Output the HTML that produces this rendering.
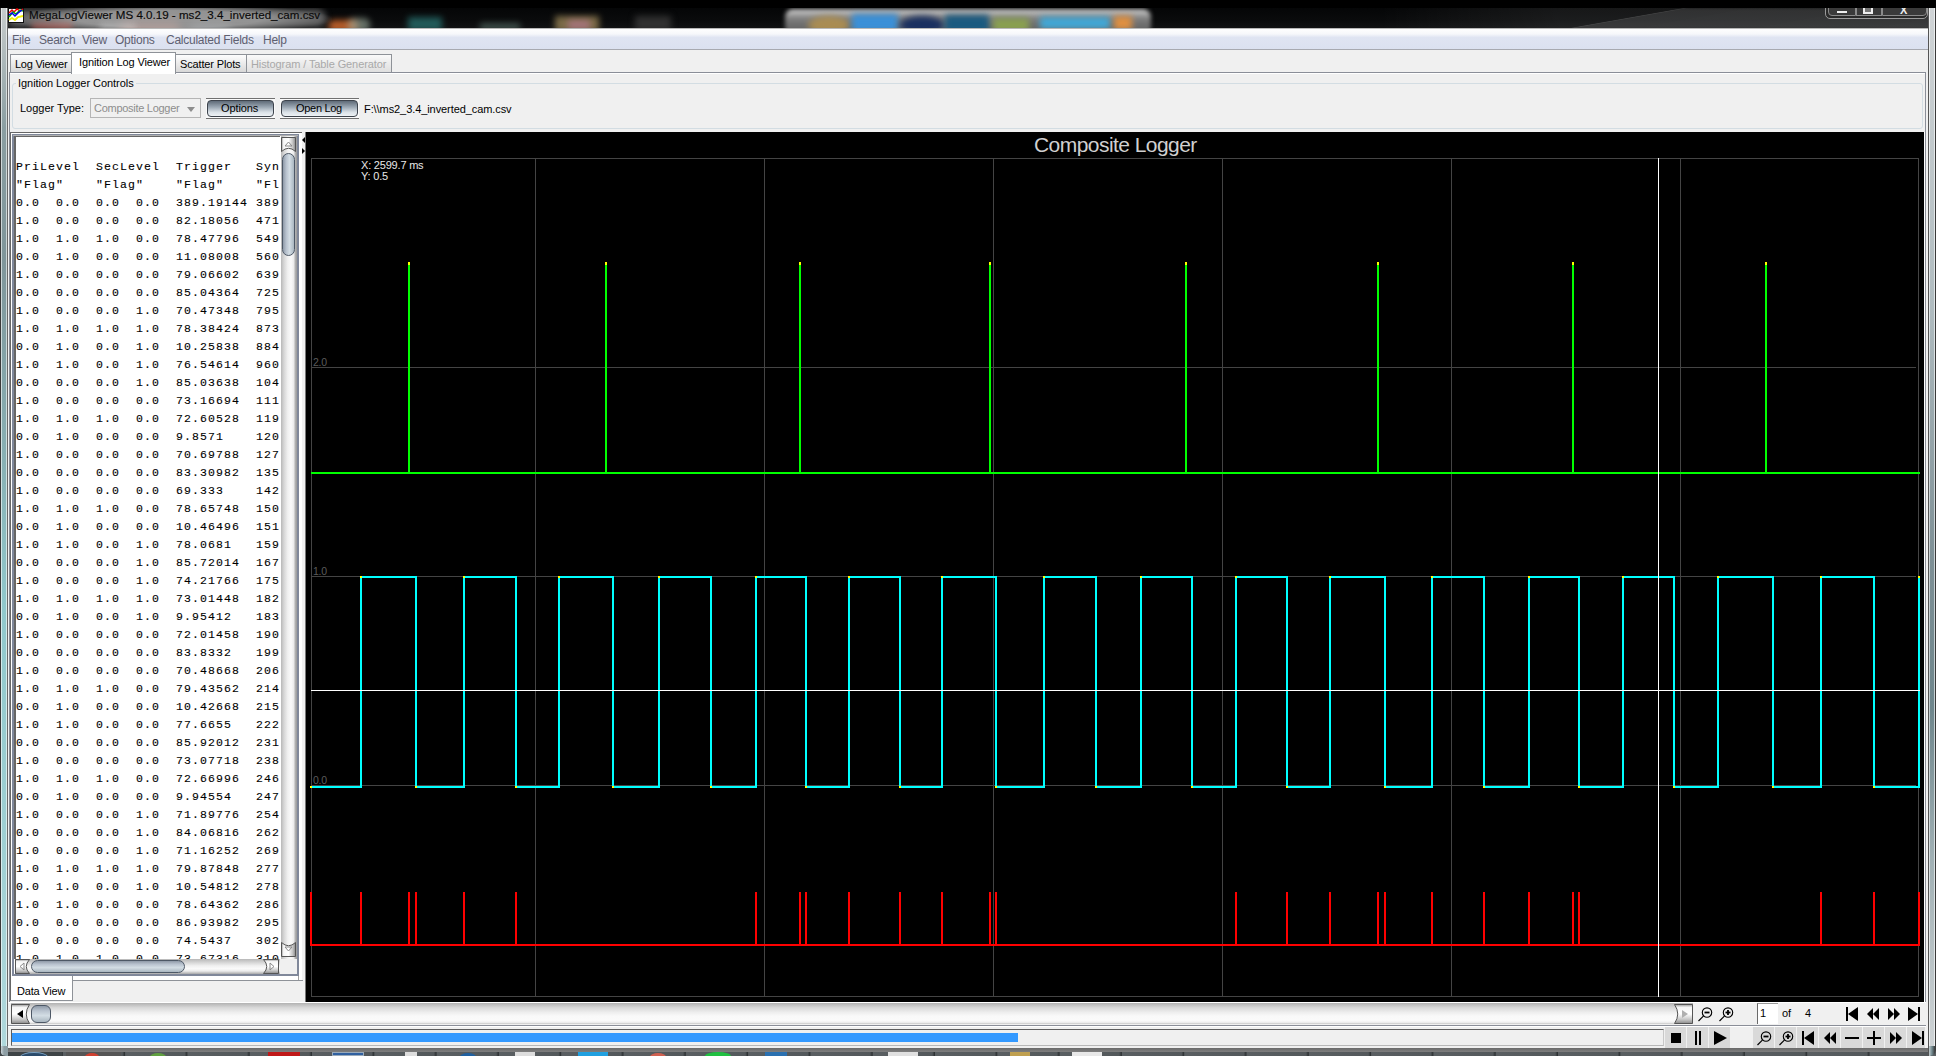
<!DOCTYPE html>
<html><head><meta charset="utf-8">
<style>
*{box-sizing:border-box;margin:0;padding:0}
html,body{width:1936px;height:1056px;overflow:hidden;background:#000;font-family:"Liberation Sans",sans-serif;font-size:11px;color:#000}
.a{position:absolute}
.t{position:absolute;white-space:pre;line-height:13px;font-size:11px}
.m{position:absolute;white-space:pre;line-height:14px;font-size:12px;color:#5e6070;letter-spacing:-0.25px}
.tabi{position:absolute;border:1px solid #8e9298;border-bottom:none;background:linear-gradient(#fdfdfd,#ececec 45%,#d6d6d6)}
.sbtn{position:absolute;background:linear-gradient(90deg,#7a7a7a 0,#f4f4f4 12%,#ffffff 45%,#c8c8c8 80%,#8a8a8a 100%);border:1px solid #5a5a5a;border-radius:2px}
.sbtnh{position:absolute;background:linear-gradient(#7a7a7a 0,#f4f4f4 12%,#ffffff 45%,#c8c8c8 80%,#8a8a8a 100%);border:1px solid #5a5a5a;border-radius:2px}
.thumbv{position:absolute;border:1px solid #4d5866;border-radius:7px;background:linear-gradient(90deg,#8f9aa8,#b9c3cf 30%,#d3dde4 60%,#a9b6c0)}
.thumbh{position:absolute;border:1px solid #4d5866;border-radius:7px;background:linear-gradient(#8f9aa8,#b9c3cf 30%,#d3dde4 60%,#a9b6c0)}
.tb{position:absolute;top:1027px;height:21px;background:#d9d9d9}
</style></head><body>
<svg width="0" height="0" style="position:absolute"><defs>
<linearGradient id="gv" x1="0" y1="0" x2="1" y2="0"><stop offset="0" stop-color="#9a9a9a"/><stop offset=".15" stop-color="#f6f6f6"/><stop offset=".5" stop-color="#ffffff"/><stop offset=".8" stop-color="#c4c4c4"/><stop offset="1" stop-color="#8a8a8a"/></linearGradient>
<linearGradient id="gh" x1="0" y1="0" x2="0" y2="1"><stop offset="0" stop-color="#9a9a9a"/><stop offset=".15" stop-color="#f6f6f6"/><stop offset=".5" stop-color="#ffffff"/><stop offset=".8" stop-color="#c4c4c4"/><stop offset="1" stop-color="#8a8a8a"/></linearGradient>
</defs></svg>
<!-- ===== title bar ===== -->
<div class="a" style="left:0;top:0;width:1936px;height:8px;background:#000"></div>
<div class="a" style="left:0;top:8px;width:1936px;height:21px;background:linear-gradient(90deg,rgba(0,0,0,0) 0,rgba(0,0,0,0) 1380px,rgba(255,255,255,.07) 1560px),linear-gradient(#050607,#0a0b0c 60%,#121314);overflow:hidden">
  <div class="a" style="left:1565px;top:0;width:600px;height:21px;transform-origin:0 100%;transform:skewX(-80deg);background:linear-gradient(90deg,rgba(255,255,255,.22) 0,rgba(255,255,255,.11) 5px,rgba(255,255,255,.13) 100%);filter:blur(1.5px)"></div>
  <div class="a" style="left:120px;top:10px;width:60px;height:14px;border-radius:7px;background:#c0503a;filter:blur(4px);opacity:.8"></div>
  <div class="a" style="left:190px;top:12px;width:40px;height:12px;border-radius:6px;background:#8a9aa8;filter:blur(4px);opacity:.5"></div>
  <div class="a" style="left:328px;top:12px;width:30px;height:12px;border-radius:6px;background:#e07030;filter:blur(3px);opacity:.8"></div>
  <div class="a" style="left:348px;top:10px;width:22px;height:14px;border-radius:6px;background:#a0b0a0;filter:blur(3px);opacity:.6"></div>
  <div class="a" style="left:408px;top:9px;width:34px;height:14px;background:#2a7a78;filter:blur(3px);opacity:.7"></div>
  <div class="a" style="left:480px;top:15px;width:40px;height:8px;background:#6a8a80;filter:blur(3px);opacity:.5"></div>
  <div class="a" style="left:555px;top:8px;width:44px;height:16px;background:#a08a5a;filter:blur(3px);opacity:.75"></div>
  <div class="a" style="left:568px;top:12px;width:22px;height:10px;background:#c07a9a;filter:blur(3px);opacity:.6"></div>
  <div class="a" style="left:635px;top:8px;width:36px;height:16px;background:#303030;filter:blur(3px)"></div>
  <!-- dock -->
  <div class="a" style="left:785px;top:1px;width:366px;height:26px;border-radius:8px;background:linear-gradient(#d0d0d0,#7a7a7a 40%,#5a5a5a);filter:blur(2px)"></div>
  <div class="a" style="left:808px;top:8px;width:42px;height:18px;border-radius:50%;background:#b09050;filter:blur(3px);opacity:.9"></div>
  <div class="a" style="left:852px;top:6px;width:46px;height:18px;background:#3a90d8;filter:blur(3px)"></div>
  <div class="a" style="left:900px;top:8px;width:44px;height:18px;border-radius:50%;background:#1a3060;filter:blur(3px)"></div>
  <div class="a" style="left:945px;top:7px;width:44px;height:18px;background:#1a5a80;filter:blur(3px)"></div>
  <div class="a" style="left:993px;top:10px;width:36px;height:14px;background:#8aa050;filter:blur(3px)"></div>
  <div class="a" style="left:1040px;top:9px;width:70px;height:12px;background:#40a8d8;filter:blur(3px)"></div>
  <div class="a" style="left:1114px;top:8px;width:18px;height:14px;background:#e09040;filter:blur(3px)"></div>
  <!-- title glow -->
  <div class="a" style="left:6px;top:-4px;width:326px;height:30px;border-radius:14px;background:radial-gradient(ellipse at center,rgba(190,190,190,.75) 40%,rgba(120,120,120,.0) 72%);"></div>
  <div class="a" style="left:6px;top:1px;width:320px;height:18px;border-radius:9px;background:rgba(150,150,150,.55);filter:blur(3px)"></div>
  <div class="a" style="left:32px;top:15px;width:40px;height:8px;background:rgba(215,110,100,.55);filter:blur(3px)"></div>
  <div class="a" style="left:100px;top:15px;width:36px;height:8px;background:rgba(220,220,220,.35);filter:blur(3px)"></div>
  <!-- controls -->
  <div class="a" style="left:1825px;top:-4px;width:103px;height:15px;border:1px solid #9a9a9a;border-radius:0 0 5px 5px;background:#2a2a2a"></div>
  <div class="a" style="left:1828px;top:-4px;width:28px;height:12px;border:1px solid #8a8a8a;border-radius:0 0 0 4px;background:#3a3a3a"></div>
  <div class="a" style="left:1856px;top:-4px;width:26px;height:12px;border:1px solid #8a8a8a;background:#3a3a3a"></div>
  <div class="a" style="left:1882px;top:-4px;width:45px;height:12px;border:1px solid #8a8a8a;border-radius:0 0 4px 0;background:#3a3a3a"></div>
  <div class="a" style="left:1837px;top:3px;width:10px;height:2px;background:#eee"></div>
  <div class="a" style="left:1863px;top:0px;width:10px;height:6px;border:2px solid #eee;border-top:none;background:#777"></div>
  <div class="a" style="left:1900px;top:-1px;width:10px;height:6px;color:#eee;font-size:11px;line-height:6px;font-weight:bold">X</div>
</div>
<!-- icon -->
<svg class="a" style="left:8px;top:8px" width="16" height="15" viewBox="0 0 16 15">
<rect x="0.5" y="0.5" width="15" height="14" fill="#fff" stroke="#111"/>
<polyline points="1,5 4,2 6,4 9,1 12,3 15,1" fill="none" stroke="#e00" stroke-width="1.5"/>
<polyline points="1,9 5,4 8,6 12,2 15,3" fill="none" stroke="#0a0" stroke-width="1.5"/>
<polyline points="1,7 4,5 7,8 10,5 14,2" fill="none" stroke="#00e" stroke-width="1.5"/>
<polyline points="1,12 4,10 7,12 10,9 15,8" fill="none" stroke="#ee0" stroke-width="1.8"/>
</svg>
<div class="a" style="left:29px;top:8px;font-size:11.6px;line-height:14px;white-space:pre;color:#0a0a0a;-webkit-text-stroke:0.15px #0a0a0a">MegaLogViewer MS 4.0.19 - ms2_3.4_inverted_cam.csv</div>

<!-- ===== window frame ===== -->
<div class="a" style="left:0;top:8px;width:8px;height:1042px;background:linear-gradient(90deg,#3a3a3a 0,#3a3a3a 1px,rgba(255,255,255,.6) 1px,rgba(255,255,255,.6) 2px,transparent 2px,transparent 6px,rgba(255,255,255,.6) 6px,rgba(255,255,255,.6) 7px,#686868 7px),linear-gradient(#c8cccc 0,#8a9ea2 120px,#7f959a 250px,#88b0b4 450px,#90c8cc 600px,#a0d0d4 850px,#b0d8dc 1042px)"></div>
<div class="a" style="left:1928px;top:8px;width:8px;height:1042px;background:linear-gradient(90deg,#555 0,#555 1px,rgba(255,255,255,.6) 1px,rgba(255,255,255,.6) 2px,transparent 2px,transparent 6px,rgba(255,255,255,.6) 6px,rgba(255,255,255,.6) 7px,#3a3a3a 7px),linear-gradient(#d0d4d6 0,#b0bcc0 300px,#7e9096 550px,#6e868c 700px,#a0b0b4 850px,#d0d4d6 1042px)"></div>

<!-- ===== client ===== -->
<div class="a" style="left:8px;top:29px;width:1920px;height:1019px;background:#f0f0f0"></div>
<div class="a" style="left:8px;top:28px;width:1920px;height:1px;background:#b8b8b8"></div>
<!-- menu -->
<div class="a" style="left:8px;top:29px;width:1920px;height:20px;background:linear-gradient(#fefefe 0,#f6f7fb 25%,#dfe4f2 42%,#dbe1f0 100%)"></div>
<div class="a" style="left:8px;top:49px;width:1920px;height:1px;background:#a7a9b0"></div>
<div class="m" style="left:12px;top:33px">File</div>
<div class="m" style="left:39px;top:33px">Search</div>
<div class="m" style="left:82px;top:33px">View</div>
<div class="m" style="left:115px;top:33px">Options</div>
<div class="m" style="left:166px;top:33px">Calculated Fields</div>
<div class="m" style="left:263px;top:33px">Help</div>

<!-- tabs -->
<div class="a" style="left:8px;top:50px;width:1920px;height:22px;background:#f0f0f0"></div>
<div class="tabi" style="left:10px;top:54px;width:62px;height:19px"></div>
<div class="t" style="left:15px;top:58px;letter-spacing:-0.25px">Log Viewer</div>
<div class="tabi" style="left:175px;top:54px;width:72px;height:19px"></div>
<div class="t" style="left:180px;top:58px;letter-spacing:-0.15px">Scatter Plots</div>
<div class="tabi" style="left:246px;top:54px;width:146px;height:19px;background:linear-gradient(#fafafa,#ececec 45%,#dedede)"></div>
<div class="t" style="left:251px;top:58px;color:#a9a9a9;letter-spacing:-0.1px">Histogram / Table Generator</div>

<!-- content panel -->
<div class="a" style="left:9px;top:72px;width:1917px;height:1px;background:#8a8e98"></div>
<div class="a" style="left:9px;top:72px;width:1px;height:930px;background:#8a8e98"></div>
<div class="a" style="left:1925px;top:72px;width:1px;height:930px;background:#8a8e98"></div>
<div class="a" style="left:10px;top:73px;width:1915px;height:1px;background:#fff"></div>
<div class="a" style="left:71px;top:52px;width:105px;height:22px;border:1px solid #8e9298;border-bottom:none;background:#fff"></div>
<div class="t" style="left:79px;top:56px;letter-spacing:-0.12px">Ignition Log Viewer</div>

<!-- group box -->
<div class="a" style="left:12px;top:83px;width:1911px;height:46px;border:1px solid #d3dde3;border-radius:3px"></div>
<div class="t" style="left:16px;top:77px;padding:0 2px;background:#f0f0f0;letter-spacing:-0.05px">Ignition Logger Controls</div>
<div class="t" style="left:20px;top:102px">Logger Type:</div>
<div class="a" style="left:90px;top:98px;width:111px;height:20px;border:1px solid #b5b5b5;background:#f0f0f0"></div>
<div class="t" style="left:94px;top:102px;color:#8d8d8d;letter-spacing:-0.28px">Composite Logger</div>
<svg class="a" style="left:187px;top:107px" width="9" height="6"><polygon points="0,0 8,0 4,5" fill="#8d8d8d"/></svg>
<div class="a" style="left:206px;top:98px;width:69px;height:21px;border-top:1px solid #707070;border-bottom:1px solid #707070;background:#fafafa"></div>
<div class="a" style="left:207px;top:100px;width:67px;height:17px;border:1px solid #3d434c;border-radius:4px;background:linear-gradient(#5f6b78,#9aa6b2 40%,#dbe2e8 75%,#eef2f5)"></div>
<div class="t" style="left:221px;top:102px;letter-spacing:-0.1px">Options</div>
<div class="a" style="left:280px;top:98px;width:79px;height:21px;border-top:1px solid #707070;border-bottom:1px solid #707070;background:#fafafa"></div>
<div class="a" style="left:281px;top:100px;width:77px;height:17px;border:1px solid #3d434c;border-radius:4px;background:linear-gradient(#5f6b78,#9aa6b2 40%,#dbe2e8 75%,#eef2f5)"></div>
<div class="t" style="left:296px;top:102px;letter-spacing:-0.3px">Open Log</div>
<div class="t" style="left:364px;top:103px;letter-spacing:-0.08px">F:\\ms2_3.4_inverted_cam.csv</div>

<!-- ===== data panel ===== -->
<div class="a" style="left:10px;top:132px;width:292px;height:869px;border:1px solid #666;border-right:none;border-bottom:none;background:#fff"></div>
<div class="a" style="left:301px;top:132px;width:1px;height:1px;background:#666"></div>
<div class="a" style="left:11px;top:975px;width:288px;height:5px;background:#fff;border-right:1px solid #a0a0a0"></div>
<div class="a" style="left:12px;top:134px;width:287px;height:842px;border:2px solid #80889a;border-top-width:1px"></div>
<div class="a" style="left:13px;top:135px;width:285px;height:1px;background:#b0b0b0"></div>
<div class="a" style="left:14px;top:136px;width:267px;height:823px;background:#fff;border-top:1px solid #666;border-left:2px solid #666;overflow:hidden">
<pre style="position:absolute;left:0;top:21px;font-family:'Liberation Mono',monospace;font-size:11.5px;letter-spacing:1.1px;line-height:18px;tab-size:5;-moz-tab-size:5;color:#000;-webkit-text-stroke:0.1px #000">PriLevel	SecLevel	Trigger	Sync
&quot;Flag&quot;	&quot;Flag&quot;	&quot;Flag&quot;	&quot;Flag&quot;
0.0	0.0	0.0	0.0	389.19144	389
1.0	0.0	0.0	0.0	82.18056	471
1.0	1.0	1.0	0.0	78.47796	549
0.0	1.0	0.0	0.0	11.08008	560
1.0	0.0	0.0	0.0	79.06602	639
0.0	0.0	0.0	0.0	85.04364	725
1.0	0.0	0.0	1.0	70.47348	795
1.0	1.0	1.0	1.0	78.38424	873
0.0	1.0	0.0	1.0	10.25838	884
1.0	1.0	0.0	1.0	76.54614	960
0.0	0.0	0.0	1.0	85.03638	104
1.0	0.0	0.0	0.0	73.16694	111
1.0	1.0	1.0	0.0	72.60528	119
0.0	1.0	0.0	0.0	9.8571	120
1.0	0.0	0.0	0.0	70.69788	127
0.0	0.0	0.0	0.0	83.30982	135
1.0	0.0	0.0	0.0	69.333	142
1.0	1.0	1.0	0.0	78.65748	150
0.0	1.0	0.0	0.0	10.46496	151
1.0	1.0	0.0	1.0	78.0681	159
0.0	0.0	0.0	1.0	85.72014	167
1.0	0.0	0.0	1.0	74.21766	175
1.0	1.0	1.0	1.0	73.01448	182
0.0	1.0	0.0	1.0	9.95412	183
1.0	0.0	0.0	0.0	72.01458	190
0.0	0.0	0.0	0.0	83.8332	199
1.0	0.0	0.0	0.0	70.48668	206
1.0	1.0	1.0	0.0	79.43562	214
0.0	1.0	0.0	0.0	10.42668	215
1.0	1.0	0.0	0.0	77.6655	222
0.0	0.0	0.0	0.0	85.92012	231
1.0	0.0	0.0	0.0	73.07718	238
1.0	1.0	1.0	0.0	72.66996	246
0.0	1.0	0.0	0.0	9.94554	247
1.0	0.0	0.0	1.0	71.89776	254
0.0	0.0	0.0	1.0	84.06816	262
1.0	0.0	0.0	1.0	71.16252	269
1.0	1.0	1.0	1.0	79.87848	277
0.0	1.0	0.0	1.0	10.54812	278
1.0	1.0	0.0	0.0	78.64362	286
0.0	0.0	0.0	0.0	86.93982	295
1.0	0.0	0.0	0.0	74.5437	302
1.0	1.0	1.0	0.0	73.67316	310</pre>
</div>
<!-- v scroll -->
<div class="a" style="left:280px;top:136px;width:17px;height:823px;background:linear-gradient(90deg,#ffffff 0,#ffffff 6%,#b8b8b8 6%,#d4d4d4 22%,#f0f0f0 45%,#fafafa 65%,#ececec 80%,#a0a0a0 94%,#a0a0a0 100%)"></div>
<svg class="a" style="left:281px;top:137px" width="15" height="15"><path d="M0.5,0.5 H14.5 V14.5 Q7.5,8 0.5,14.5 Z" fill="url(#gv)" stroke="#555"/></svg>
<svg class="a" style="left:284px;top:141px" width="9" height="6"><polygon points="1,5 4.5,1 8,5" fill="none" stroke="#8a8a8a"/></svg>
<div class="thumbv" style="left:282px;top:153px;width:13px;height:103px"></div>
<svg class="a" style="left:281px;top:942px" width="15" height="15"><path d="M0.5,14.5 H14.5 V0.5 Q7.5,7 0.5,0.5 Z" fill="url(#gv)" stroke="#555"/></svg>
<svg class="a" style="left:284px;top:946px" width="9" height="6"><polygon points="1,1 4.5,5 8,1" fill="none" stroke="#8a8a8a"/></svg>
<!-- h scroll -->
<div class="a" style="left:15px;top:959px;width:266px;height:15px;background:linear-gradient(#b8b8b8 0,#d4d4d4 22%,#f0f0f0 45%,#fafafa 65%,#ececec 80%,#a8a8a8 100%)"></div>
<svg class="a" style="left:15px;top:959px" width="15" height="15"><path d="M0.5,0.5 V14.5 H14.5 Q8,7.5 14.5,0.5 Z" fill="url(#gh)" stroke="#555"/></svg>
<svg class="a" style="left:19px;top:962px" width="6" height="9"><polygon points="5,1 1,4.5 5,8" fill="none" stroke="#8a8a8a"/></svg>
<div class="thumbh" style="left:31px;top:960px;width:154px;height:13px"></div>
<svg class="a" style="left:263px;top:959px" width="16" height="15"><path d="M15.5,0.5 V14.5 H0.5 Q7,7.5 0.5,0.5 Z" fill="url(#gh)" stroke="#555"/></svg>
<svg class="a" style="left:269px;top:962px" width="6" height="9"><polygon points="1,1 5,4.5 1,8" fill="none" stroke="#8a8a8a"/></svg>
<div class="a" style="left:280px;top:959px;width:17px;height:15px;background:#f0f0f0"></div>
<!-- splitter arrows -->
<svg class="a" style="left:301px;top:136px" width="5" height="20"><polygon points="4,1 1,4 4,7" fill="#000"/><polygon points="1,12 4,15 1,18" fill="#000"/></svg>
<!-- data view tab -->
<div class="a" style="left:72px;top:980px;width:231px;height:21px;background:#f0f0f0;border-top:1px solid #8e9298"></div>
<div class="a" style="left:10px;top:976px;width:63px;height:25px;border:1px solid #8e9298;border-top:none;border-left-color:#666;background:#fff"></div>
<div class="t" style="left:17px;top:985px;letter-spacing:-0.2px">Data View</div>

<!-- ===== chart ===== -->
<div class="a" style="left:305px;top:132px;width:1619px;height:870px;background:#000;border-left:1px solid #777"></div>
<div class="a" style="left:1034px;top:134px;font-size:21px;line-height:22px;letter-spacing:-0.55px;color:#d0d0d0;white-space:pre">Composite Logger</div>
<div class="a" style="left:361px;top:160px;font-size:11px;line-height:11px;letter-spacing:-0.2px;color:#e8e8e8;white-space:pre">X: 2599.7 ms
Y: 0.5</div>
<svg width="1936" height="1056" viewBox="0 0 1936 1056" style="position:absolute;left:0;top:0" shape-rendering="crispEdges">
<rect x="535" y="158" width="1" height="839" fill="#444"/>
<rect x="764" y="158" width="1" height="839" fill="#444"/>
<rect x="993" y="158" width="1" height="839" fill="#444"/>
<rect x="1222" y="158" width="1" height="839" fill="#444"/>
<rect x="1451" y="158" width="1" height="839" fill="#444"/>
<rect x="1680" y="158" width="1" height="839" fill="#444"/>
<rect x="311" y="367" width="1605" height="1" fill="#444"/>
<rect x="311" y="576" width="1605" height="1" fill="#444"/>
<rect x="311" y="785" width="1605" height="1" fill="#444"/>
<rect x="311" y="158" width="1608" height="1" fill="#444"/>
<rect x="311" y="996" width="1608" height="1" fill="#444"/>
<rect x="311" y="158" width="1" height="839" fill="#444"/>
<rect x="1918" y="158" width="1" height="839" fill="#444"/>
<text x="313" y="366" font-family="Liberation Sans" font-size="10.5" letter-spacing="-0.3" fill="#5a5a5a" shape-rendering="auto">2.0</text>
<text x="313" y="575" font-family="Liberation Sans" font-size="10.5" letter-spacing="-0.3" fill="#5a5a5a" shape-rendering="auto">1.0</text>
<text x="313" y="784" font-family="Liberation Sans" font-size="10.5" letter-spacing="-0.3" fill="#5a5a5a" shape-rendering="auto">0.0</text>
<rect x="311" y="472" width="1609" height="2" fill="#00ff00"/>
<rect x="408" y="262" width="2" height="212" fill="#00ff00"/>
<rect x="408" y="262" width="2" height="3" fill="#ffff00"/>
<rect x="605" y="262" width="2" height="212" fill="#00ff00"/>
<rect x="605" y="262" width="2" height="3" fill="#ffff00"/>
<rect x="799" y="262" width="2" height="212" fill="#00ff00"/>
<rect x="799" y="262" width="2" height="3" fill="#ffff00"/>
<rect x="989" y="262" width="2" height="212" fill="#00ff00"/>
<rect x="989" y="262" width="2" height="3" fill="#ffff00"/>
<rect x="1185" y="262" width="2" height="212" fill="#00ff00"/>
<rect x="1185" y="262" width="2" height="3" fill="#ffff00"/>
<rect x="1377" y="262" width="2" height="212" fill="#00ff00"/>
<rect x="1377" y="262" width="2" height="3" fill="#ffff00"/>
<rect x="1572" y="262" width="2" height="212" fill="#00ff00"/>
<rect x="1572" y="262" width="2" height="3" fill="#ffff00"/>
<rect x="1765" y="262" width="2" height="212" fill="#00ff00"/>
<rect x="1765" y="262" width="2" height="3" fill="#ffff00"/>
<rect x="311" y="786" width="51" height="2" fill="#00ffff"/>
<rect x="360" y="576" width="2" height="212" fill="#00ffff"/>
<rect x="360" y="576" width="57" height="2" fill="#00ffff"/>
<rect x="415" y="576" width="2" height="212" fill="#00ffff"/>
<rect x="415" y="786" width="50" height="2" fill="#00ffff"/>
<rect x="463" y="576" width="2" height="212" fill="#00ffff"/>
<rect x="463" y="576" width="54" height="2" fill="#00ffff"/>
<rect x="515" y="576" width="2" height="212" fill="#00ffff"/>
<rect x="515" y="786" width="45" height="2" fill="#00ffff"/>
<rect x="558" y="576" width="2" height="212" fill="#00ffff"/>
<rect x="558" y="576" width="56" height="2" fill="#00ffff"/>
<rect x="612" y="576" width="2" height="212" fill="#00ffff"/>
<rect x="612" y="786" width="48" height="2" fill="#00ffff"/>
<rect x="658" y="576" width="2" height="212" fill="#00ffff"/>
<rect x="658" y="576" width="54" height="2" fill="#00ffff"/>
<rect x="710" y="576" width="2" height="212" fill="#00ffff"/>
<rect x="710" y="786" width="47" height="2" fill="#00ffff"/>
<rect x="755" y="576" width="2" height="212" fill="#00ffff"/>
<rect x="755" y="576" width="52" height="2" fill="#00ffff"/>
<rect x="805" y="576" width="2" height="212" fill="#00ffff"/>
<rect x="805" y="786" width="45" height="2" fill="#00ffff"/>
<rect x="848" y="576" width="2" height="212" fill="#00ffff"/>
<rect x="848" y="576" width="53" height="2" fill="#00ffff"/>
<rect x="899" y="576" width="2" height="212" fill="#00ffff"/>
<rect x="899" y="786" width="44" height="2" fill="#00ffff"/>
<rect x="941" y="576" width="2" height="212" fill="#00ffff"/>
<rect x="941" y="576" width="56" height="2" fill="#00ffff"/>
<rect x="995" y="576" width="2" height="212" fill="#00ffff"/>
<rect x="995" y="786" width="50" height="2" fill="#00ffff"/>
<rect x="1043" y="576" width="2" height="212" fill="#00ffff"/>
<rect x="1043" y="576" width="54" height="2" fill="#00ffff"/>
<rect x="1095" y="576" width="2" height="212" fill="#00ffff"/>
<rect x="1095" y="786" width="47" height="2" fill="#00ffff"/>
<rect x="1140" y="576" width="2" height="212" fill="#00ffff"/>
<rect x="1140" y="576" width="53" height="2" fill="#00ffff"/>
<rect x="1191" y="576" width="2" height="212" fill="#00ffff"/>
<rect x="1191" y="786" width="46" height="2" fill="#00ffff"/>
<rect x="1235" y="576" width="2" height="212" fill="#00ffff"/>
<rect x="1235" y="576" width="53" height="2" fill="#00ffff"/>
<rect x="1286" y="576" width="2" height="212" fill="#00ffff"/>
<rect x="1286" y="786" width="45" height="2" fill="#00ffff"/>
<rect x="1329" y="576" width="2" height="212" fill="#00ffff"/>
<rect x="1329" y="576" width="57" height="2" fill="#00ffff"/>
<rect x="1384" y="576" width="2" height="212" fill="#00ffff"/>
<rect x="1384" y="786" width="49" height="2" fill="#00ffff"/>
<rect x="1431" y="576" width="2" height="212" fill="#00ffff"/>
<rect x="1431" y="576" width="54" height="2" fill="#00ffff"/>
<rect x="1483" y="576" width="2" height="212" fill="#00ffff"/>
<rect x="1483" y="786" width="47" height="2" fill="#00ffff"/>
<rect x="1528" y="576" width="2" height="212" fill="#00ffff"/>
<rect x="1528" y="576" width="52" height="2" fill="#00ffff"/>
<rect x="1578" y="576" width="2" height="212" fill="#00ffff"/>
<rect x="1578" y="786" width="46" height="2" fill="#00ffff"/>
<rect x="1622" y="576" width="2" height="212" fill="#00ffff"/>
<rect x="1622" y="576" width="53" height="2" fill="#00ffff"/>
<rect x="1673" y="576" width="2" height="212" fill="#00ffff"/>
<rect x="1673" y="786" width="46" height="2" fill="#00ffff"/>
<rect x="1717" y="576" width="2" height="212" fill="#00ffff"/>
<rect x="1717" y="576" width="57" height="2" fill="#00ffff"/>
<rect x="1772" y="576" width="2" height="212" fill="#00ffff"/>
<rect x="1772" y="786" width="50" height="2" fill="#00ffff"/>
<rect x="1820" y="576" width="2" height="212" fill="#00ffff"/>
<rect x="1820" y="576" width="55" height="2" fill="#00ffff"/>
<rect x="1873" y="576" width="2" height="212" fill="#00ffff"/>
<rect x="1873" y="786" width="47" height="2" fill="#00ffff"/>
<rect x="1918" y="576" width="2" height="212" fill="#00ffff"/>
<rect x="1918" y="576" width="2" height="2" fill="#00ffff"/>
<rect x="360" y="576" width="2" height="2" fill="#ffff00"/>
<rect x="415" y="786" width="2" height="2" fill="#ffff00"/>
<rect x="463" y="576" width="2" height="2" fill="#ffff00"/>
<rect x="515" y="786" width="2" height="2" fill="#ffff00"/>
<rect x="558" y="576" width="2" height="2" fill="#ffff00"/>
<rect x="612" y="786" width="2" height="2" fill="#ffff00"/>
<rect x="658" y="576" width="2" height="2" fill="#ffff00"/>
<rect x="710" y="786" width="2" height="2" fill="#ffff00"/>
<rect x="755" y="576" width="2" height="2" fill="#ffff00"/>
<rect x="805" y="786" width="2" height="2" fill="#ffff00"/>
<rect x="848" y="576" width="2" height="2" fill="#ffff00"/>
<rect x="899" y="786" width="2" height="2" fill="#ffff00"/>
<rect x="941" y="576" width="2" height="2" fill="#ffff00"/>
<rect x="995" y="786" width="2" height="2" fill="#ffff00"/>
<rect x="1043" y="576" width="2" height="2" fill="#ffff00"/>
<rect x="1095" y="786" width="2" height="2" fill="#ffff00"/>
<rect x="1140" y="576" width="2" height="2" fill="#ffff00"/>
<rect x="1191" y="786" width="2" height="2" fill="#ffff00"/>
<rect x="1235" y="576" width="2" height="2" fill="#ffff00"/>
<rect x="1286" y="786" width="2" height="2" fill="#ffff00"/>
<rect x="1329" y="576" width="2" height="2" fill="#ffff00"/>
<rect x="1384" y="786" width="2" height="2" fill="#ffff00"/>
<rect x="1431" y="576" width="2" height="2" fill="#ffff00"/>
<rect x="1483" y="786" width="2" height="2" fill="#ffff00"/>
<rect x="1528" y="576" width="2" height="2" fill="#ffff00"/>
<rect x="1578" y="786" width="2" height="2" fill="#ffff00"/>
<rect x="1622" y="576" width="2" height="2" fill="#ffff00"/>
<rect x="1673" y="786" width="2" height="2" fill="#ffff00"/>
<rect x="1717" y="576" width="2" height="2" fill="#ffff00"/>
<rect x="1772" y="786" width="2" height="2" fill="#ffff00"/>
<rect x="1820" y="576" width="2" height="2" fill="#ffff00"/>
<rect x="1873" y="786" width="2" height="2" fill="#ffff00"/>
<rect x="1918" y="576" width="2" height="2" fill="#ffff00"/>
<rect x="310" y="786" width="2" height="2" fill="#ffff00"/>
<rect x="310" y="944" width="1610" height="2" fill="#ff0000"/>
<rect x="310" y="892" width="2" height="54" fill="#ff0000"/>
<rect x="360" y="892" width="2" height="54" fill="#ff0000"/>
<rect x="408" y="892" width="2" height="54" fill="#ff0000"/>
<rect x="415" y="892" width="2" height="54" fill="#ff0000"/>
<rect x="463" y="892" width="2" height="54" fill="#ff0000"/>
<rect x="515" y="892" width="2" height="54" fill="#ff0000"/>
<rect x="755" y="892" width="2" height="54" fill="#ff0000"/>
<rect x="799" y="892" width="2" height="54" fill="#ff0000"/>
<rect x="805" y="892" width="2" height="54" fill="#ff0000"/>
<rect x="848" y="892" width="2" height="54" fill="#ff0000"/>
<rect x="899" y="892" width="2" height="54" fill="#ff0000"/>
<rect x="941" y="892" width="2" height="54" fill="#ff0000"/>
<rect x="989" y="892" width="2" height="54" fill="#ff0000"/>
<rect x="995" y="892" width="2" height="54" fill="#ff0000"/>
<rect x="1235" y="892" width="2" height="54" fill="#ff0000"/>
<rect x="1286" y="892" width="2" height="54" fill="#ff0000"/>
<rect x="1329" y="892" width="2" height="54" fill="#ff0000"/>
<rect x="1377" y="892" width="2" height="54" fill="#ff0000"/>
<rect x="1384" y="892" width="2" height="54" fill="#ff0000"/>
<rect x="1431" y="892" width="2" height="54" fill="#ff0000"/>
<rect x="1483" y="892" width="2" height="54" fill="#ff0000"/>
<rect x="1528" y="892" width="2" height="54" fill="#ff0000"/>
<rect x="1572" y="892" width="2" height="54" fill="#ff0000"/>
<rect x="1578" y="892" width="2" height="54" fill="#ff0000"/>
<rect x="1820" y="892" width="2" height="54" fill="#ff0000"/>
<rect x="1873" y="892" width="2" height="54" fill="#ff0000"/>
<rect x="1918" y="892" width="2" height="54" fill="#ff0000"/>
<rect x="1658" y="158" width="1" height="839" fill="#fff"/>
<rect x="311" y="690" width="1609" height="1" fill="#fff"/>
</svg>
<div class="a" style="left:1924px;top:132px;width:1px;height:870px;background:#fff"></div>

<!-- ===== bottom toolbar ===== -->
<div class="a" style="left:8px;top:1002px;width:1918px;height:1px;background:#fff"></div>
<div class="a" style="left:11px;top:1003px;width:1682px;height:21px;background:linear-gradient(#b2b2b2 0,#d8d8d8 22%,#eeeeee 45%,#f9f9f9 62%,#fafafa 85%,#ececec 93%,#c6c6c6 100%)"></div>
<svg class="a" style="left:11px;top:1004px" width="19" height="20"><path d="M0.5,0.5 V19.5 H18.5 Q12,10.0 18.5,0.5 Z" fill="url(#gh)" stroke="#555"/></svg>
<svg class="a" style="left:16px;top:1009px" width="8" height="10"><polygon points="7,1 1,5 7,9" fill="#000"/></svg>
<div class="thumbh" style="left:31px;top:1005px;width:20px;height:18px;border-radius:6px"></div>
<svg class="a" style="left:1674px;top:1004px" width="19" height="20"><path d="M18.5,0.5 V19.5 H0.5 Q7,10.0 0.5,0.5 Z" fill="url(#gh)" stroke="#555"/></svg>
<svg class="a" style="left:1681px;top:1009px" width="8" height="10"><polygon points="1,1 7,5 1,9" fill="#b0b0b0"/></svg>
<!-- zoom icons top -->
<svg class="a" style="left:1696px;top:1005px" width="40" height="18" shape-rendering="geometricPrecision">
 <g fill="none" stroke="#000" stroke-width="1.15">
  <circle cx="11" cy="7.5" r="4.7"/><line x1="2.5" y1="16" x2="7.6" y2="10.9"/><line x1="8.5" y1="7.5" x2="13.5" y2="7.5" stroke-width="1.8"/>
  <circle cx="32" cy="7.5" r="4.7"/><line x1="23.5" y1="16" x2="28.6" y2="10.9"/><line x1="29.5" y1="7.5" x2="34.5" y2="7.5" stroke-width="1.8"/><line x1="32" y1="5" x2="32" y2="10" stroke-width="1.8"/>
 </g>
</svg>
<div class="a" style="left:1757px;top:1003px;width:21px;height:21px;background:#fff;border-left:1px solid #6a6a6a;border-top:1px solid #9a9a9a"></div>
<div class="t" style="left:1760px;top:1007px;font-size:11px">1</div>
<div class="t" style="left:1782px;top:1007px;font-size:11px">of</div>
<div class="t" style="left:1805px;top:1007px;font-size:11px">4</div>
<svg class="a" style="left:1844px;top:1006px" width="80" height="16" shape-rendering="crispEdges">
 <rect x="2" y="1" width="2" height="14"/><polygon points="14,1 4,8 14,15" shape-rendering="geometricPrecision"/>
 <polygon points="29,2 23,8 29,14" shape-rendering="geometricPrecision"/><polygon points="35,2 29,8 35,14" shape-rendering="geometricPrecision"/>
 <polygon points="44,2 50,8 44,14" shape-rendering="geometricPrecision"/><polygon points="50,2 56,8 50,14" shape-rendering="geometricPrecision"/>
 <polygon points="64,1 74,8 64,15" shape-rendering="geometricPrecision"/><rect x="74" y="1" width="2" height="14"/>
</svg>
<div class="a" style="left:8px;top:1025px;width:1918px;height:1px;background:#8a8e98"></div>
<div class="a" style="left:8px;top:1026px;width:1918px;height:1px;background:#fff"></div>
<!-- progress -->
<div class="a" style="left:11px;top:1029px;width:1653px;height:17px;border:1px solid #5e5e5e;border-right-color:#c8c8c8;border-bottom-color:#b8b8b8;background:#f0f0f0"></div>
<div class="a" style="left:12px;top:1033px;width:1006px;height:9px;background:#3399ff"></div>
<!-- toolbar buttons -->
<div class="tb" style="left:1665px;width:21px"></div>
<div class="tb" style="left:1687px;width:21px"></div>
<div class="tb" style="left:1709px;width:21px"></div>
<div class="tb" style="left:1753px;width:21px"></div>
<div class="tb" style="left:1775px;width:21px"></div>
<div class="tb" style="left:1797px;width:21px"></div>
<div class="tb" style="left:1819px;width:21px"></div>
<div class="tb" style="left:1841px;width:21px"></div>
<div class="tb" style="left:1863px;width:21px"></div>
<div class="tb" style="left:1885px;width:21px"></div>
<div class="tb" style="left:1907px;width:18px"></div>
<svg class="a" style="left:1664px;top:1027px" width="264" height="21">
 <rect x="7" y="6" width="10" height="10" shape-rendering="crispEdges"/>
 <rect x="31" y="4" width="2" height="14" shape-rendering="crispEdges"/><rect x="35" y="4" width="2" height="14" shape-rendering="crispEdges"/>
 <polygon points="50,4 63,11 50,18"/>
 <g fill="none" stroke="#000" stroke-width="1.15">
  <circle cx="102" cy="9.5" r="4.7"/><line x1="93.5" y1="18" x2="98.6" y2="12.9"/><line x1="99.5" y1="9.5" x2="104.5" y2="9.5" stroke-width="1.8"/>
  <circle cx="124" cy="9.5" r="4.7"/><line x1="115.5" y1="18" x2="120.6" y2="12.9"/><line x1="121.5" y1="9.5" x2="126.5" y2="9.5" stroke-width="1.8"/><line x1="124" y1="7" x2="124" y2="12" stroke-width="1.8"/>
 </g>
 <rect x="138" y="4" width="2" height="14" shape-rendering="crispEdges"/><polygon points="150,4 140,11 150,18"/>
 <polygon points="166,5 160,11 166,17"/><polygon points="172,5 166,11 172,17"/>
 <rect x="181" y="10" width="14" height="2" shape-rendering="crispEdges"/>
 <rect x="203" y="10" width="14" height="2" shape-rendering="crispEdges"/><rect x="209" y="4" width="2" height="14" shape-rendering="crispEdges"/>
 <polygon points="226,5 232,11 226,17"/><polygon points="232,5 238,11 232,17"/>
 <polygon points="248,4 258,11 248,18"/><rect x="258" y="4" width="2" height="14" shape-rendering="crispEdges"/>
</svg>

<!-- ===== frame bottom + taskbar ===== -->
<div class="a" style="left:0;top:1048px;width:1936px;height:4px;background:linear-gradient(#6a6a6a,#7e7e7e)"></div>
<div class="a" style="left:0;top:1052px;width:1936px;height:4px;background:linear-gradient(90deg,#3e4446 0,#3e4446 62px,transparent 62px),repeating-linear-gradient(90deg,#2e3234 0,#5a5f62 1px,#53585b 60px,#2e3234 62.3px);overflow:hidden">
  <div class="a" style="left:20px;top:0;width:28px;height:10px;border-radius:50%;border:1px solid #7aa0c0;background:#2a4a6a"></div>
  <div class="a" style="left:66px;top:0;width:55px;height:4px;background:#555"></div>
  <div class="a" style="left:85px;top:1px;width:14px;height:8px;border-radius:50%;background:#d04030"></div>
  <div class="a" style="left:150px;top:1px;width:16px;height:8px;border-radius:50%;background:#60a040"></div>
  <div class="a" style="left:268px;top:0;width:32px;height:4px;background:#c01818"></div>
  <div class="a" style="left:332px;top:0;width:32px;height:4px;background:#3060a0;border:1px solid #9ab"></div>
  <div class="a" style="left:405px;top:0;width:12px;height:4px;background:#ddd"></div>
  <div class="a" style="left:460px;top:1px;width:16px;height:8px;border-radius:50%;background:#2060a0"></div>
  <div class="a" style="left:515px;top:0;width:20px;height:4px;background:#ddd"></div>
  <div class="a" style="left:578px;top:0;width:30px;height:4px;background:#20a0e0"></div>
  <div class="a" style="left:650px;top:1px;width:16px;height:8px;border-radius:50%;background:#d06050"></div>
  <div class="a" style="left:705px;top:0;width:26px;height:8px;border-radius:50%;background:#20c040"></div>
  <div class="a" style="left:765px;top:0;width:22px;height:4px;background:#2a70b0"></div>
  <div class="a" style="left:888px;top:0;width:30px;height:4px;background:#e0e0e0"></div>
  <div class="a" style="left:1010px;top:0;width:20px;height:4px;background:#c0a050"></div>
  <div class="a" style="left:1072px;top:0;width:30px;height:4px;background:#e8e8e8"></div>
</div>
<div class="a" style="left:0;top:1046px;width:8px;height:10px;background:linear-gradient(90deg,#3a3a3a 1px,#c8d2d6 1px,#8e9ea4 4px);border-radius:0 0 0 6px"></div>
<div class="a" style="left:1928px;top:1046px;width:8px;height:10px;background:linear-gradient(90deg,#555 1px,#c0cacc 1px,#70888e 4px,#3a3a3a 7px);border-radius:0 0 6px 0"></div>
</body></html>
